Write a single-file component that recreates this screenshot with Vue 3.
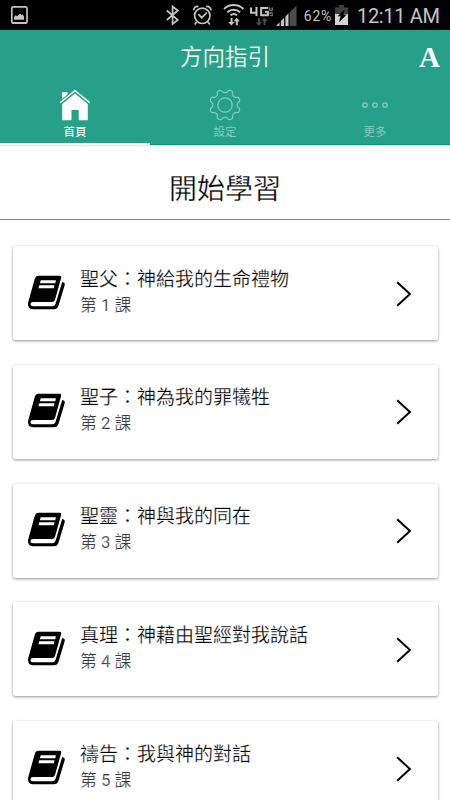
<template>
  <div class="app">
    <div class="status-bar">
      <svg class="status-icons" viewBox="0 0 450 30" width="450" height="30">
        <rect x="11.8" y="6.8" width="15.2" height="16.4" rx="1.5" fill="none" stroke="#c4c4c4" stroke-width="1.7" />
        <path d="M12 22h15v1.5H12zM14 19.7v-2.8l1.6-1.7 1.4 1 3-2.7 1.5 1.8 1.2-.8 1.3 2v3.2z" fill="#c4c4c4" />
        <path d="M166.8 10.5l11 9.5-5.2 4V6.500l5.200 4-11 9.500" fill="none" stroke="#c4c4c4" stroke-width="1.7" />
        <g fill="none" stroke="#c4c4c4" stroke-width="1.7">
          <circle cx="202.3" cy="15.8" r="7.7" />
          <path d="M193.8 10.2c-.5-2 2-4.4 4.6-3.6M210.8 10.2c.5-2-2-4.4-4.6-3.6M196.8 21.8l-2 2.6M207.8 21.8l2 2.6M198.3 14.2l3.5 3.5 5-5" />
        </g>
        <g fill="none" stroke="#c4c4c4" stroke-width="2">
          <path d="M224 9c5.2-5.4 14.2-5.4 19.4 0M227.3 12.3c3.5-3.5 9.3-3.5 12.8 0M230.5 15.4c1.9-1.9 4.5-1.9 6.4 0" />
        </g>
        <path d="M230.5 18h2v4h2.2l-3.3 3.6-3.2-3.6h2.3zM235.8 25.3h2v-4h2.2l-3.3-3.6-3.2 3.6h2.3z" fill="#c4c4c4" />
        <path d="M251 7.5v5.2h6.3M256.5 7v9M268.3 8h-7.2v7.2h6.8v-3.5h-3" fill="none" stroke="#c4c4c4" stroke-width="2" />
        <path d="M269.5 7.5v3h3v-3M271 7.5v3M272.7 12.5h-3v1.3h3v1.8h-3" fill="none" stroke="#777" stroke-width="1" />
        <path d="M258 18.2h2v4h2.2l-3.3 3.6-3.2-3.6h2.3zM263.5 25.3h2v-4h2.2l-3.3-3.6-3.2 3.6h2.3z" fill="#4b4b4b" />
        <path d="M276 26L296.5 5.5V26z" fill="#4b4b4b" />
        <path d="M276 26l3.5-3.5V26zM281 26v-5l3-3v8zM285.5 26v-9.5l3-3V26z" fill="#c4c4c4" />
        <path d="M280.2 21v5M284.7 17v9M289.2 13v13" stroke="#000" stroke-width=".8" />
        <path d="M335 7.5h4.2V5h4.6v2.5h4.2V25h-13z" fill="#404040" />
        <path d="M335 14h13v11h-13z" fill="#d4d4d4" />
        <path d="M344.8 9.5l-7.5 6.8h3.2l-1.5 6 7.8-7.7h-3.3z" fill="#000" />
        <text class="battery-text" x="303.8" y="21.2" textLength="27.5">62%</text>
        <text class="clock" x="357" y="23" textLength="83">12:11 AM</text>
      </svg>
    </div>

    <header class="header">
      <div class="toolbar">
        <h1 class="app-title">方向指引</h1>
        <button class="font-btn">A</button>
      </div>
      <nav class="tabs">
        <button
          v-for="tab in tabs"
          :key="tab.id"
          class="tab"
          :class="{ active: current === tab.id }"
          @click="current = tab.id"
        >
          <svg class="tab-icon" viewBox="0 0 30 30">
            <template v-if="tab.id === 'home'">
              <path d="M2 2.2h5.5v4.3L2 11.4z" fill="currentColor" />
              <path d="M2.2 14L15 3.5 27.8 14v16.3h-9.1V20h-7.2v10.3H2.2z" fill="currentColor" />
              <path d="M.3 12.6L15 .7l14.7 11.9" class="roof-gap" />
              <path d="M.3 12.6L15 .7l14.7 11.9" fill="none" stroke="currentColor" stroke-width="1.4" />
            </template>
            <template v-else-if="tab.id === 'settings'">
              <path :d="gearPath" fill="none" stroke="currentColor" stroke-width="1.2" stroke-linejoin="round" />
              <circle cx="15" cy="15" r="7.2" fill="none" stroke="currentColor" stroke-width="1.2" />
            </template>
            <template v-else>
              <circle v-for="x in [5, 15, 25]" :key="x" :cx="x" cy="15" r="2.2" fill="none" stroke="currentColor" stroke-width="1.3" />
            </template>
          </svg>
          <span class="tab-label">{{ tab.label }}</span>
        </button>
      </nav>
    </header>

    <main>
      <h2 class="section-title">開始學習</h2>
      <div class="lessons">
        <div v-for="(lesson, i) in lessons" :key="lesson" class="card">
          <svg class="book" viewBox="0 0 38 36" width="38" height="36">
            <path d="M10.6 1.7h20.6q2.5 0 1.9 2.3l-6 21.6q-.6 2.5-3.2 2.5H5.2q-2.7 0-2.7 2 0 2.200 2.700 2.200h19q2.700 0 3.600-3.200L34.200 8q3.300.5 2.400 3.400l-6.100 20.300q-1.100 3.600-4.700 3.600H5.300Q0 35.300 0 30.200q0-1.300.5-3L6.800 4.700q.8-3 3.800-3z" />
            <path d="M12.700 6.200h15.200l-.6 3H11.900zM11.300 11.300h15.200l-.6 3H10.500z" fill="#fff" />
          </svg>
          <div class="card-text">
            <div class="card-title">{{ lesson }}</div>
            <div class="card-sub">第 {{ i + 1 }} 課</div>
          </div>
          <svg class="chevron" viewBox="0 0 16 26" width="16" height="26">
            <path d="M1.2 1.3L13.9 13 1.2 24.7" fill="none" stroke="#000" stroke-width="2" />
          </svg>
        </div>
      </div>
    </main>
  </div>
</template>

<script setup>
import { ref } from 'vue'

const current = ref('home')

const tabs = [
  { id: 'home', label: '首頁' },
  { id: 'settings', label: '設定' },
  { id: 'more', label: '更多' }
]

const lessons = [
  '聖父：神給我的生命禮物',
  '聖子：神為我的罪犧牲',
  '聖靈：神與我的同在',
  '真理：神藉由聖經對我說話',
  '禱告：我與神的對話'
]

// eight rounded teeth, centered at 15,15
function buildGear() {
  const points = []
  for (let i = 0; i < 96; i++) {
    const a = (i / 96) * Math.PI * 2
    const wave = Math.cos(8 * a + Math.PI)
    const r = 13.9 + 1.6 * Math.tanh(2 * wave) / Math.tanh(2)
    points.push(`${(15 + r * Math.sin(a)).toFixed(2)} ${(15 - r * Math.cos(a)).toFixed(2)}`)
  }
  return `M${points.join('L')}Z`
}
const gearPath = buildGear()
</script>

<style>
body {
  margin: 0;
  background: #fff;
}
</style>

<style scoped>
.app {
  width: 450px;
  height: 800px;
  overflow: hidden;
  background: #fff;
  color: #000;
  font-family: Roboto, "Noto Sans CJK TC", sans-serif;
}

.status-bar {
  height: 30px;
  background: #000;
}

.status-icons {
  display: block;
}

.battery-text,
.clock {
  fill: #c4c4c4;
  font-size: 14px;
}

.clock {
  font-size: 20px;
}

.header {
  height: 115px;
  background: #26a088;
  color: #fff;
  box-shadow: inset 0 -1px #009979, 0 1px 1px #e6e6e6;
}

.toolbar {
  display: grid;
  grid-template-columns: 40px 1fr 40px;
  align-items: center;
  height: 53px;
}

.app-title {
  grid-column: 2;
  margin: 0;
  text-align: center;
  font-size: 22.5px;
  line-height: 55px;
  font-weight: 400;
  -webkit-text-stroke: 0.25px #26a088;
}

.font-btn {
  padding: 0 1px 2px 0;
  border: 0;
  background: none;
  color: #fff;
  font: bold 29px/30px "Liberation Serif", serif;
}

.tabs {
  display: flex;
  height: 62px;
}

.tab {
  flex: 1;
  display: flex;
  flex-direction: column;
  align-items: center;
  padding: 7px 0 0;
  border: 0;
  border-bottom: 2px solid transparent;
  background: none;
  color: rgba(255, 255, 255, 0.45);
  font-family: inherit;
}

.tab.active {
  color: #fff;
  border-bottom-color: #fff;
}

.tab-icon {
  width: 30px;
  height: 30px;
  overflow: visible;
}

.roof-gap {
  fill: none;
  stroke: #26a088;
  stroke-width: 3.6;
}

.tab-label {
  margin-top: 4px;
  font-size: 11.5px;
  line-height: 17px;
}

.section-title {
  margin: 0;
  height: 74px;
  border-bottom: 1px solid #888;
  text-align: center;
  font-size: 28px;
  line-height: 90px;
  font-weight: 400;
  -webkit-text-stroke: 0.3px #fff;
}

.lessons {
  display: flex;
  flex-direction: column;
  gap: 24.8px;
  padding: 26px 12.5px;
}

.card {
  display: flex;
  align-items: center;
  height: 94px;
  padding: 0 26px 0 15.5px;
  box-sizing: border-box;
  border-radius: 2.5px;
  background: #fff;
  box-shadow: 0 1px 3px rgba(0, 0, 0, 0.42);
}

.book {
  margin-top: -3px;
}

.chevron {
  margin-top: 1px;
}

.card-text {
  flex: 1;
  margin: -5px 0 0 14px;
}

.card-title {
  font-size: 19px;
  line-height: 28px;
  -webkit-text-stroke: 0.25px #fff;
}

.card-sub {
  color: #3c3c3c;
  font-size: 16.8px;
  line-height: 22px;
  -webkit-text-stroke: 0.2px #fff;
}
</style>
